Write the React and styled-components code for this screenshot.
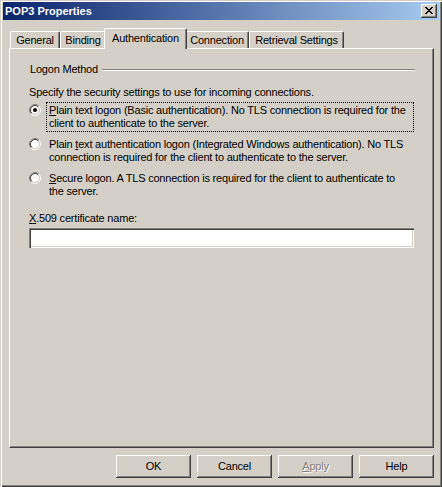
import React from 'react';
import styled, { createGlobalStyle } from 'styled-components';

const FACE = '#D4D0C8';
const SHADOW = '#808080';
const DARK = '#404040';

const GlobalStyle = createGlobalStyle`
  html, body {
    margin: 0;
    padding: 0;
    background: ${FACE};
  }
  * {
    box-sizing: border-box;
  }
`

const Window = styled.div`
  width: 442px;
  height: 487px;
  display: flex;
  flex-direction: column;
  padding: 2px 3px 3px 3px;
  background: ${FACE};
  box-shadow: inset 1px 1px ${FACE}, inset 2px 2px #ffffff,
    inset -1px -1px ${DARK}, inset -2px -2px ${SHADOW};
  font-family: Tahoma, "Liberation Sans", Arial, sans-serif;
  font-size: 11px;
  line-height: 13px;
  letter-spacing: -0.2px;
  color: #000;
`

const TitleBar = styled.div`
  height: 18px;
  display: flex;
  align-items: center;
  justify-content: space-between;
  padding: 0 2px 0 2px;
  background: linear-gradient(to right, #0a246a, #a6caf0);
`

const TitleText = styled.span`
  color: #fff;
  font-weight: bold;
  letter-spacing: 0;
`

const CloseButton = styled.div`
  width: 16px;
  height: 14px;
  display: flex;
  align-items: center;
  justify-content: center;
  background: ${FACE};
  box-shadow: inset -1px -1px ${DARK}, inset 1px 1px #ffffff,
    inset -2px -2px ${SHADOW};
  padding: 0 0 1px 0;
`

const Content = styled.div`
  display: flex;
  flex-direction: column;
  padding: 0 5px 0 6px;
  margin-top: 8px;
`

const TabStrip = styled.div`
  display: flex;
  align-items: flex-end;
  height: 20px;
  padding-left: 1px;
`

const Tab = styled.div`
  width: ${p => p.$width}px;
  height: ${p => (p.$active ? 21 : 17)}px;
  margin: ${p => (p.$active ? '0 -2px -1px -2px' : '0')};
  display: flex;
  align-items: flex-start;
  justify-content: center;
  padding-top: ${p => (p.$active ? 3 : 2)}px;
  background: ${FACE};
  border-top: 1px solid #fff;
  border-left: 1px solid #fff;
  border-right: 1px solid ${DARK};
  border-radius: 2px 2px 0 0;
  box-shadow: inset -1px 0 ${SHADOW};
  position: relative;
  z-index: ${p => (p.$active ? 2 : 1)};
  white-space: nowrap;
`

const Panel = styled.div`
  height: 400px;
  display: flex;
  flex-direction: column;
  padding: 14px 19px 0 19px;
  border-top: 1px solid #fff;
  border-left: 1px solid #fff;
  border-right: 1px solid ${DARK};
  border-bottom: 1px solid ${DARK};
  box-shadow: inset -1px -1px ${SHADOW};
`

const GroupHeader = styled.div`
  display: flex;
  align-items: center;
  gap: 4px;
  padding-left: 1px;
`

const GroupLine = styled.div`
  flex: 1;
  height: 2px;
  border-top: 1px solid ${SHADOW};
  border-bottom: 1px solid #fff;
  margin-top: 1px;
  margin-right: -1px;
`

const Para = styled.div`
  margin-top: ${p => p.$top || 0}px;
  white-space: nowrap;
`

const OptionRow = styled.div`
  display: flex;
  align-items: flex-start;
  gap: 5px;
  margin-top: ${p => p.$top}px;
`

const RadioBox = styled.svg`
  flex: none;
  margin-top: 2px;
`

const OptionLabel = styled.div`
  flex: 1;
  padding: 1px 2px;
  border: 1px ${p => (p.$focused ? 'dotted #000' : 'solid transparent')};
  white-space: nowrap;
`

const Line = styled.div``

const Mnemonic = styled.span`
  text-decoration: underline;
`

const TextBox = styled.div`
  height: 20px;
  margin-top: 3px;
  background: #fff;
  box-shadow: inset 1px 1px ${SHADOW}, inset 2px 2px ${DARK},
    inset -1px -1px #ffffff, inset -2px -2px ${FACE};
`

const ButtonRow = styled.div`
  display: flex;
  justify-content: flex-end;
  gap: 6px;
  margin-top: 7px;
`

const Button = styled.div`
  width: 75px;
  height: 23px;
  display: flex;
  align-items: center;
  justify-content: center;
  padding-bottom: 1px;
  background: ${FACE};
  box-shadow: inset -1px -1px ${DARK}, inset 1px 1px #ffffff,
    inset -2px -2px ${SHADOW};
  color: ${p => (p.$disabled ? SHADOW : '#000')};
  text-shadow: ${p => (p.$disabled ? '1px 1px #fff' : 'none')};
`

function Radio({ checked }) {
  return (
    <RadioBox width="12" height="12" viewBox="0 0 12 12">
      <circle cx="6" cy="6" r="4.2" fill="#fff" />
      <path d="M2.11 9.89 A5.5 5.5 0 0 1 9.89 2.11" fill="none" stroke={SHADOW} strokeWidth="1" />
      <path d="M9.89 2.11 A5.5 5.5 0 0 1 2.11 9.89" fill="none" stroke="#fff" strokeWidth="1" />
      <path d="M2.82 9.18 A4.5 4.5 0 0 1 9.18 2.82" fill="none" stroke={DARK} strokeWidth="1" />
      <path d="M9.18 2.82 A4.5 4.5 0 0 1 2.82 9.18" fill="none" stroke={FACE} strokeWidth="1" />
      {checked && <circle cx="6" cy="6" r="2" fill="#000" />}
    </RadioBox>
  );
}

function CloseGlyph() {
  return (
    <svg width="8" height="7" viewBox="0 0 8 7" shapeRendering="crispEdges">
      <path
        d="M0 0h2v1h-2z M6 0h2v1h-2z M1 1h2v1h-2z M5 1h2v1h-2z M2 2h4v1h-4z M3 3h2v1h-2z M2 4h4v1h-4z M1 5h2v1h-2z M5 5h2v1h-2z M0 6h2v1h-2z M6 6h2v1h-2z"
        fill="#000"
      />
    </svg>
  );
}

const tabs = [
  { label: 'General', width: 50 },
  { label: 'Binding', width: 46 },
  { label: 'Authentication', width: 83, active: true },
  { label: 'Connection', width: 64 },
  { label: 'Retrieval Settings', width: 95 },
];

function App() {
  return (
    <Window>
      <GlobalStyle />
      <TitleBar>
        <TitleText>POP3 Properties</TitleText>
        <CloseButton>
          <CloseGlyph />
        </CloseButton>
      </TitleBar>

      <Content>
        <TabStrip>
          {tabs.map(t => (
            <Tab key={t.label} $width={t.width} $active={t.active}>
              {t.label}
            </Tab>
          ))}
        </TabStrip>

        <Panel>
          <GroupHeader>
            <span>Logon Method</span>
            <GroupLine />
          </GroupHeader>

          <Para $top={10}>Specify the security settings to use for incoming connections.</Para>

          <OptionRow $top={3}>
            <Radio checked />
            <OptionLabel $focused>
              <Line><Mnemonic>P</Mnemonic>lain text logon (Basic authentication). No TLS connection is required for the</Line>
              <Line>client to authenticate to the server.</Line>
            </OptionLabel>
          </OptionRow>

          <OptionRow $top={4}>
            <Radio />
            <OptionLabel>
              <Line>Plain <Mnemonic>t</Mnemonic>ext authentication logon (Integrated Windows authentication). No TLS</Line>
              <Line>connection is required for the client to authenticate to the server.</Line>
            </OptionLabel>
          </OptionRow>

          <OptionRow $top={4}>
            <Radio />
            <OptionLabel>
              <Line><Mnemonic>S</Mnemonic>ecure logon. A TLS connection is required for the client to authenticate to</Line>
              <Line>the server.</Line>
            </OptionLabel>
          </OptionRow>

          <Para $top={12}><Mnemonic>X</Mnemonic>.509 certificate name:</Para>
          <TextBox />
        </Panel>

        <ButtonRow>
          <Button>OK</Button>
          <Button>Cancel</Button>
          <Button $disabled><span><Mnemonic>A</Mnemonic>pply</span></Button>
          <Button>Help</Button>
        </ButtonRow>
      </Content>
    </Window>
  );
}

export default App;
